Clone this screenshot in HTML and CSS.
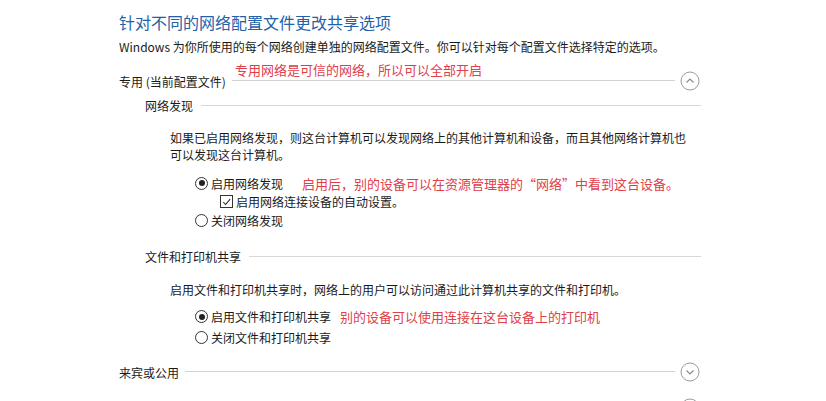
FILE: index.html
```html
<!DOCTYPE html>
<html lang="zh-CN">
<head>
<meta charset="utf-8">
<title>高级共享设置</title>
<link rel="stylesheet" href="styles.css">
</head>
<body>
<div class="page">
  <h1 class="title">针对不同的网络配置文件更改共享选项</h1>
  <p class="desc">Windows 为你所使用的每个网络创建单独的网络配置文件。你可以针对每个配置文件选择特定的选项。</p>

  <div class="group-head head-private">
    <span class="label">专用 (当前配置文件)</span>
    <span class="rule"></span>
    <svg class="chev" width="20" height="20" viewBox="0 0 20 20"><circle cx="10" cy="10" r="9" fill="none" stroke="#9a9a9a" stroke-width="1"/><path d="M6.5 11.5 L10 8 L13.5 11.5" fill="none" stroke="#8a8a8a" stroke-width="1.2"/></svg>
    <span class="note note-head">专用网络是可信的网络，所以可以全部开启</span>
  </div>

  <div class="sub-head sub-discovery">
    <span class="label">网络发现</span>
    <span class="rule"></span>
  </div>
  <p class="para para-discovery">如果已启用网络发现，则这台计算机可以发现网络上的其他计算机和设备，而且其他网络计算机也<br>可以发现这台计算机。</p>
  <div class="options">
    <div class="opt"><span class="radio on"></span><span>启用网络发现</span><span class="note note-disc">启用后，别的设备可以在资源管理器的“网络”中看到这台设备。</span></div>
    <div class="opt opt-check"><span class="check"><svg width="12" height="12" viewBox="0 0 12 12"><path d="M2.5 6 L5 8.8 L10 2.8" fill="none" stroke="#222" stroke-width="1.1"/></svg></span><span>启用网络连接设备的自动设置。</span></div>
    <div class="opt"><span class="radio"></span><span>关闭网络发现</span></div>
  </div>

  <div class="sub-head sub-share">
    <span class="label">文件和打印机共享</span>
    <span class="rule"></span>
  </div>
  <p class="para para-share">启用文件和打印机共享时，网络上的用户可以访问通过此计算机共享的文件和打印机。</p>
  <div class="options options-share">
    <div class="opt"><span class="radio on"></span><span>启用文件和打印机共享</span><span class="note note-share">别的设备可以使用连接在这台设备上的打印机</span></div>
    <div class="opt opt-tight"><span class="radio"></span><span>关闭文件和打印机共享</span></div>
  </div>

  <div class="group-head head-guest">
    <span class="label">来宾或公用</span>
    <span class="rule"></span>
    <svg class="chev" width="20" height="20" viewBox="0 0 20 20"><circle cx="10" cy="10" r="9" fill="none" stroke="#9a9a9a" stroke-width="1"/><path d="M6.5 8.5 L10 12 L13.5 8.5" fill="none" stroke="#8a8a8a" stroke-width="1.2"/></svg>
  </div>

  <div class="group-head head-all">
    <span class="label">所有网络</span>
    <span class="rule"></span>
    <svg class="chev" width="20" height="20" viewBox="0 0 20 20"><circle cx="10" cy="10" r="9" fill="none" stroke="#9a9a9a" stroke-width="1"/><path d="M6.5 8.5 L10 12 L13.5 8.5" fill="none" stroke="#8a8a8a" stroke-width="1.2"/></svg>
  </div>
</div>
</body>
</html>
```

FILE: styles.css
```css
html, body {
  margin: 0;
  padding: 0;
  background: #ffffff;
  height: 401px;
  overflow: hidden;
}
body {
  font-family: "Noto Sans CJK SC", "Noto Sans", sans-serif;
  font-size: 12px;
  color: #1a1a1a;
}
.page {
  width: 581px;
  margin-left: 119px;
  padding-top: 12px;
}
.title {
  margin: 0;
  font-size: 16px;
  line-height: 20px;
  font-weight: normal;
  color: #2461a8;
}
.desc {
  margin: 7px 0 0;
  line-height: 16px;
}
.group-head {
  position: relative;
  display: flex;
  align-items: center;
  height: 20px;
}
.group-head .rule {
  flex: 1;
  height: 1px;
  background: #d2d2d2;
  margin-left: 6px;
  margin-top: -1px;
}
.chev {
  display: block;
  margin-left: 5px;
  flex: none;
}
.head-private { margin-top: 16px; }
.head-guest { margin-top: 15px; }
.head-all { margin-top: 16px; }
.sub-head {
  display: flex;
  align-items: center;
  height: 16px;
  padding-left: 26px;
}
.sub-head .rule {
  flex: 1;
  height: 1px;
  background: #d8d8d8;
  margin-left: 8px;
  margin-right: -1px;
}
.sub-discovery { margin-top: 6px; }
.sub-share { margin-top: 19px; }
.para {
  margin: 0;
  padding-left: 51px;
  line-height: 17px;
}
.para-discovery { margin-top: 16px; }
.para-share { margin-top: 16px; }
.options {
  margin-top: 11px;
  padding-left: 76px;
}
.options-share { margin-top: 10px; }
.opt {
  display: flex;
  align-items: center;
  height: 18.5px;
}
.opt-tight { height: 20px; margin-top: 1px; }
.opt-check { padding-left: 25px; }
.radio {
  flex: none;
  width: 11px;
  height: 11px;
  border: 1px solid #333;
  border-radius: 50%;
  margin-right: 3px;
  position: relative;
  box-sizing: content-box;
}
.radio.on::after {
  content: "";
  position: absolute;
  left: 2.5px;
  top: 2.5px;
  width: 6px;
  height: 6px;
  border-radius: 50%;
  background: #222;
}
.check {
  flex: none;
  width: 11px;
  height: 11px;
  border: 1px solid #333;
  margin-right: 3px;
  display: flex;
  align-items: center;
  justify-content: center;
}
.check svg { display: block; }
.note {
  color: #e0404a;
  font-size: 13px;
}
.note-head {
  position: absolute;
  left: 116px;
  top: -9px;
  line-height: 16px;
}
.note-disc { margin-left: 19px; }
.note-share { margin-left: 9px; }
```
